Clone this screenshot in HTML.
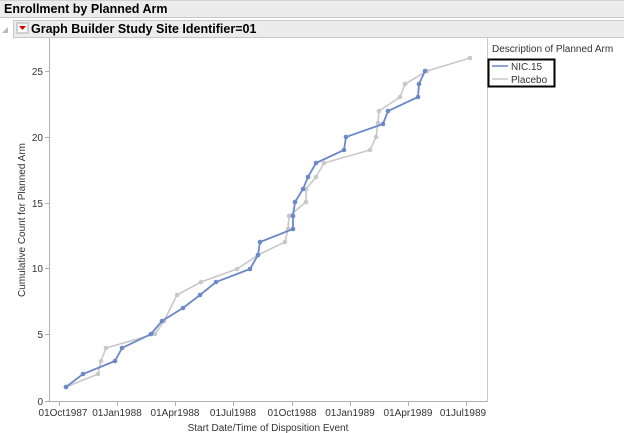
<!DOCTYPE html>
<html><head><style>
html,body{margin:0;padding:0;width:624px;height:433px;overflow:hidden;background:#fff;font-family:"Liberation Sans",sans-serif}
</style></head><body>
<svg width="624" height="433" xmlns="http://www.w3.org/2000/svg" font-family="Liberation Sans, sans-serif">
<rect x="0" y="0" width="624" height="17" fill="#ececec"/>
<line x1="0" y1="17.5" x2="624" y2="17.5" stroke="#c8c8c8"/>
<line x1="0" y1="0.5" x2="624" y2="0.5" stroke="#d4d4d4"/>
<text x="4" y="13" font-size="12.5" font-weight="bold" fill="#000">Enrollment by Planned Arm</text>
<rect x="13" y="20" width="611" height="17" fill="#ececec"/>
<line x1="13" y1="20.5" x2="624" y2="20.5" stroke="#c8c8c8"/>
<line x1="13" y1="37.5" x2="624" y2="37.5" stroke="#c8c8c8"/>
<line x1="13.5" y1="20" x2="13.5" y2="37" stroke="#c8c8c8"/>
<path d="M2 33 L8 27 L8 33 Z" fill="#bbb"/>
<rect x="17" y="23" width="11" height="10" fill="#fff" stroke="#aaa"/>
<path d="M19 26 L26 26 L22.5 30 Z" fill="#d00"/>
<text x="31" y="33" font-size="12.5" font-weight="bold" fill="#000">Graph Builder Study Site Identifier=01</text>
<line x1="49.5" y1="38" x2="49.5" y2="402" stroke="#b0b0b0"/>
<line x1="49" y1="401.5" x2="487" y2="401.5" stroke="#b0b0b0"/>
<line x1="487.5" y1="38" x2="487.5" y2="402" stroke="#c8c8c8"/>
<g font-size="10" fill="#333" text-anchor="end">
<text x="43" y="75">25</text><text x="43" y="141">20</text><text x="43" y="207">15</text><text x="43" y="272">10</text><text x="43" y="338">5</text><text x="43" y="405">0</text>
</g>
<g stroke="#b0b0b0">
<line x1="45" y1="71.5" x2="49" y2="71.5"/><line x1="45" y1="137.5" x2="49" y2="137.5"/><line x1="45" y1="203.5" x2="49" y2="203.5"/><line x1="45" y1="268.5" x2="49" y2="268.5"/><line x1="45" y1="334.5" x2="49" y2="334.5"/><line x1="45" y1="401.5" x2="49" y2="401.5"/>
<line x1="59.5" y1="402" x2="59.5" y2="406"/><line x1="117.5" y1="402" x2="117.5" y2="406"/><line x1="175.5" y1="402" x2="175.5" y2="406"/><line x1="233.5" y1="402" x2="233.5" y2="406"/><line x1="292.5" y1="402" x2="292.5" y2="406"/><line x1="350.5" y1="402" x2="350.5" y2="406"/><line x1="408.5" y1="402" x2="408.5" y2="406"/><line x1="466.5" y1="402" x2="466.5" y2="406"/>
</g>
<g font-size="10" fill="#333" text-anchor="middle">
<text x="63" y="416">01Oct1987</text><text x="117" y="416">01Jan1988</text><text x="175" y="416">01Apr1988</text><text x="233" y="416">01Jul1988</text><text x="292" y="416">01Oct1988</text><text x="350" y="416">01Jan1989</text><text x="408" y="416">01Apr1989</text><text x="463" y="416">01Jul1989</text>
<text x="268" y="431">Start Date/Time of Disposition Event</text>
</g>
<text transform="translate(25,220) rotate(-90)" font-size="10" fill="#333" text-anchor="middle">Cumulative Count for Planned Arm</text>
<g fill="#c8c8c8" stroke="#c8c8c8" stroke-width="1.6">
<polyline fill="none" points="66,387 98,374 101,361 106,348 155,334 164,321 177,295 201,282 237,269 258,255 285,242 288,229 289,216 306,202 306,189 316,177 324,163 370,150 376,137 378,123 379,111 400,97 405,84 427,71 470,58"/>
</g>
<g fill="#c8c8c8">
<circle cx="66" cy="387" r="2.3"/><circle cx="98" cy="374" r="2.3"/><circle cx="101" cy="361" r="2.3"/><circle cx="106" cy="348" r="2.3"/><circle cx="155" cy="334" r="2.3"/><circle cx="164" cy="321" r="2.3"/><circle cx="177" cy="295" r="2.3"/><circle cx="201" cy="282" r="2.3"/><circle cx="237" cy="269" r="2.3"/><circle cx="258" cy="255" r="2.3"/><circle cx="285" cy="242" r="2.3"/><circle cx="288" cy="229" r="2.3"/><circle cx="289" cy="216" r="2.3"/><circle cx="306" cy="202" r="2.3"/><circle cx="306" cy="189" r="2.3"/><circle cx="316" cy="177" r="2.3"/><circle cx="324" cy="163" r="2.3"/><circle cx="370" cy="150" r="2.3"/><circle cx="376" cy="137" r="2.3"/><circle cx="378" cy="123" r="2.3"/><circle cx="379" cy="111" r="2.3"/><circle cx="400" cy="97" r="2.3"/><circle cx="405" cy="84" r="2.3"/><circle cx="427" cy="71" r="2.3"/><circle cx="470" cy="58" r="2.3"/>
</g>
<polyline fill="none" stroke="#6b88c9" stroke-width="1.8" points="66,387 83,374 115,361 122,348 151,334 162,321 183,308 200,295 216,282 250,269 258,255 260,242 293,229 293,216 295,202 303,189 308,177 316,163 344,150 346,137 383,124 388,111 418,97 419,84 425,71"/>
<g fill="#6b88c9">
<circle cx="66" cy="387" r="2.3"/><circle cx="83" cy="374" r="2.3"/><circle cx="115" cy="361" r="2.3"/><circle cx="122" cy="348" r="2.3"/><circle cx="151" cy="334" r="2.3"/><circle cx="162" cy="321" r="2.3"/><circle cx="183" cy="308" r="2.3"/><circle cx="200" cy="295" r="2.3"/><circle cx="216" cy="282" r="2.3"/><circle cx="250" cy="269" r="2.3"/><circle cx="258" cy="255" r="2.3"/><circle cx="260" cy="242" r="2.3"/><circle cx="293" cy="229" r="2.3"/><circle cx="293" cy="216" r="2.3"/><circle cx="295" cy="202" r="2.3"/><circle cx="303" cy="189" r="2.3"/><circle cx="308" cy="177" r="2.3"/><circle cx="316" cy="163" r="2.3"/><circle cx="344" cy="150" r="2.3"/><circle cx="346" cy="137" r="2.3"/><circle cx="383" cy="124" r="2.3"/><circle cx="388" cy="111" r="2.3"/><circle cx="418" cy="97" r="2.3"/><circle cx="419" cy="84" r="2.3"/><circle cx="425" cy="71" r="2.3"/>
</g>
<text x="492" y="52" font-size="10" fill="#333">Description of Planned Arm</text>
<rect x="488.5" y="59.5" width="66" height="27" fill="#fff" stroke="#000" stroke-width="2"/>
<line x1="492" y1="66" x2="508" y2="66" stroke="#6b88c9" stroke-width="1.5"/>
<line x1="492" y1="79" x2="508" y2="79" stroke="#c8c8c8" stroke-width="1.5"/>
<text x="511" y="70" font-size="10" fill="#333">NIC.15</text>
<text x="511" y="83" font-size="10" fill="#333">Placebo</text>
</svg>
</body></html>
